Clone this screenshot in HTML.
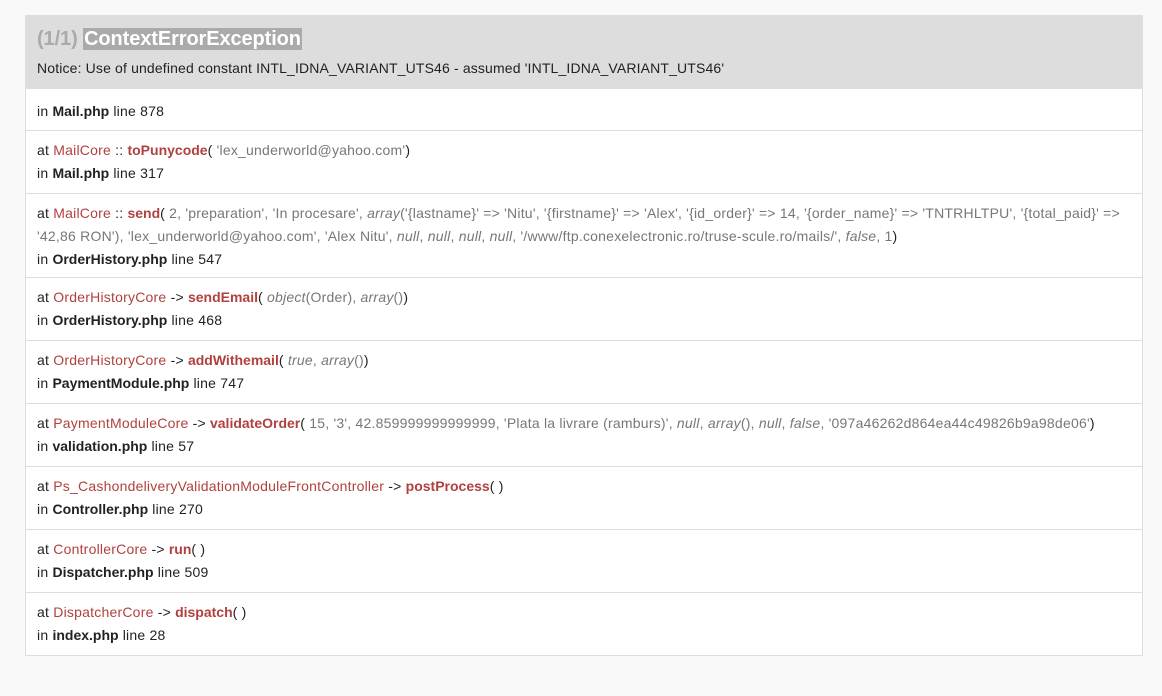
<!DOCTYPE html>
<html><head><meta charset="utf-8">
<style>
html,body{margin:0;padding:0;background:#f9f9f9;width:1162px;height:696px;overflow:hidden}
body{font-family:"Liberation Sans",Arial,sans-serif;font-size:14px;color:#222;letter-spacing:0.22px}
.box{position:absolute;left:25px;top:15px;width:1116px;background:#fff;border:1px solid #ddd}
.head{background:#ddd;height:72px;position:relative}
.title{position:absolute;left:11px;top:11px;font-size:20px;font-weight:bold;color:#aaa;line-height:24px;letter-spacing:-0.1px}
.title span{background:#aaa;color:#fff;padding:0 1px}
.notice{position:absolute;left:11px;top:41px;line-height:23px;color:#222;letter-spacing:0.15px}
.row{border-top:1px solid #ddd;padding:8px 11px 0;line-height:23px;box-sizing:border-box;white-space:nowrap}
.c{color:#b0413e}
.m{color:#b0413e;font-weight:bold;letter-spacing:0}
.a{color:#777}
b{color:#222;letter-spacing:0}
</style></head><body>
<div class="box">
<div class="head">
<div class="title">(1/1) <span>ContextErrorException</span></div>
<div class="notice">Notice: Use of undefined constant INTL_IDNA_VARIANT_UTS46 - assumed 'INTL_IDNA_VARIANT_UTS46'</div>
</div>
<div class="row" style="height:42px;padding-top:11px">in <b>Mail.php</b> line 878</div>
<div class="row" style="height:63px">at <span class="c">MailCore</span> :: <span class="m">toPunycode</span>( <span class="a">'lex_underworld@yahoo.com'</span>)<br>in <b>Mail.php</b> line 317</div>
<div class="row" style="height:84px">at <span class="c">MailCore</span> :: <span class="m">send</span>( <span class="a">2, 'preparation', 'In procesare', <i>array</i>('{lastname}' =&gt; 'Nitu', '{firstname}' =&gt; 'Alex', '{id_order}' =&gt; 14, '{order_name}' =&gt; 'TNTRHLTPU', '{total_paid}' =&gt;<br>'42,86 RON'), 'lex_underworld@yahoo.com', 'Alex Nitu', <i>null</i>, <i>null</i>, <i>null</i>, <i>null</i>, '/www/ftp.conexelectronic.ro/truse-scule.ro/mails/', <i>false</i>, 1</span>)<br>in <b>OrderHistory.php</b> line 547</div>
<div class="row" style="height:63px">at <span class="c">OrderHistoryCore</span> -&gt; <span class="m">sendEmail</span>( <span class="a"><i>object</i>(Order), <i>array</i>()</span>)<br>in <b>OrderHistory.php</b> line 468</div>
<div class="row" style="height:63px">at <span class="c">OrderHistoryCore</span> -&gt; <span class="m">addWithemail</span>( <span class="a"><i>true</i>, <i>array</i>()</span>)<br>in <b>PaymentModule.php</b> line 747</div>
<div class="row" style="height:63px">at <span class="c">PaymentModuleCore</span> -&gt; <span class="m">validateOrder</span>( <span class="a">15, '3', 42.859999999999999, 'Plata la livrare (ramburs)', <i>null</i>, <i>array</i>(), <i>null</i>, <i>false</i>, '097a46262d864ea44c49826b9a98de06'</span>)<br>in <b>validation.php</b> line 57</div>
<div class="row" style="height:63px">at <span class="c">Ps_CashondeliveryValidationModuleFrontController</span> -&gt; <span class="m">postProcess</span>( )<br>in <b>Controller.php</b> line 270</div>
<div class="row" style="height:63px">at <span class="c">ControllerCore</span> -&gt; <span class="m">run</span>( )<br>in <b>Dispatcher.php</b> line 509</div>
<div class="row" style="height:63px">at <span class="c">DispatcherCore</span> -&gt; <span class="m">dispatch</span>( )<br>in <b>index.php</b> line 28</div>
</div>
</body></html>
